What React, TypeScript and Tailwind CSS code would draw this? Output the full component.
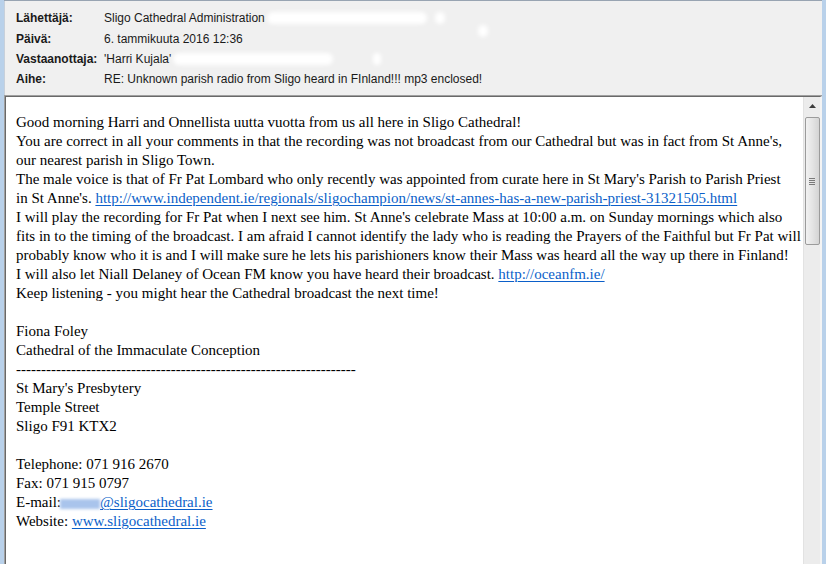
import React from 'react';

const serif = { fontFamily: '"Liberation Serif", "Times New Roman", serif' };

function Redact({ w, className = '' }: { w: string; className?: string }) {
  return <span className={`inline-block h-[12px] align-middle rounded-full bg-white blur-[2px] ${w} ${className}`} />;
}

function Link({ children }: { children: React.ReactNode }) {
  return <a className="text-[#0b5fc9] underline decoration-1 underline-offset-[2px]">{children}</a>;
}

const headerRows: [string, React.ReactNode][] = [
  ['Lähettäjä:', <>Sligo Cathedral Administration <Redact w="w-[160px]" className="ml-[2px]" /><Redact w="w-[10px]" className="ml-[8px] h-[8px]" /></>],
  ['Päivä:', <>6. tammikuuta 2016 12:36 <Redact w="w-[10px]" className="ml-[235px] h-[8px] -mt-[16px]" /></>],
  ['Vastaanottaja:', <>'Harri Kujala' <Redact w="w-[160px]" className="ml-[2px]" /><Redact w="w-[8px]" className="ml-[40px] h-[8px]" /></>],
  ['Aihe:', <>RE: Unknown parish radio from Sligo heard in FInland!!! mp3 enclosed!</>],
];

const bodyLines: React.ReactNode[] = [
  'Good morning Harri and Onnellista uutta vuotta from us all here in Sligo Cathedral!',
  "You are correct in all your comments in that the recording was not broadcast from our Cathedral but was in fact from St Anne's,",
  'our nearest parish in Sligo Town.',
  "The male voice is that of Fr Pat Lombard who only recently was appointed from curate here in St Mary's Parish to Parish Priest",
  <>in St Anne's. <Link>http://www.independent.ie/regionals/sligochampion/news/st-annes-has-a-new-parish-priest-31321505.html</Link></>,
  "I will play the recording for Fr Pat when I next see him. St Anne's celebrate Mass at 10:00 a.m. on Sunday mornings which also",
  'fits in to the timing of the broadcast. I am afraid I cannot identify the lady who is reading the Prayers of the Faithful but Fr Pat will',
  'probably know who it is and I will make sure he lets his parishioners know their Mass was heard all the way up there in Finland!',
  <>I will also let Niall Delaney of Ocean FM know you have heard their broadcast. <Link>http://oceanfm.ie/</Link></>,
  'Keep listening - you might hear the Cathedral broadcast the next time!',
  '',
  'Fiona Foley',
  'Cathedral of the Immaculate Conception',
  '-'.repeat(68),
  "St Mary's Presbytery",
  'Temple Street',
  'Sligo F91 KTX2',
  '',
  'Telephone: 071 916 2670',
  'Fax: 071 915 0797',
  <>E-mail:<span className="inline-block w-[40px] h-[10px] align-middle bg-[#a9c4ec] blur-[1.5px] -ml-[1px]" /><Link>@sligocathedral.ie</Link></>,
  <>Website: <Link>www.sligocathedral.ie</Link></>,
];

export default function App() {
  return (
    <div className="w-[826px] h-[564px] overflow-hidden flex bg-[#b9d1ea]">
      <div className="ml-[4px] w-[818px] h-full flex flex-col bg-[#f0f0f0] border-t border-[#98a4b2]">
        {/* header fields */}
        <div className="h-[94px] pt-[7px] text-[12px] text-[#1a1a1a] border-l border-[#c8d0da]" style={{ fontFamily: '"Liberation Sans", Arial, sans-serif' }}>
          {headerRows.map(([label, value]) => (
            <div key={label} className="flex items-center h-[20.4px] whitespace-nowrap">
              <div className="w-[99px] pl-[11px] font-bold">{label}</div>
              <div className="flex items-center">{value}</div>
            </div>
          ))}
        </div>

        {/* message body */}
        <div className="flex-1 min-h-0 border-t border-l border-[#a0a0a0]">
          <div className="h-full flex border-t border-l border-[#696969] border-r-2 border-r-[#f4f4f4] bg-white">
            <div className="flex-1 min-w-0 overflow-hidden pl-[10px] pt-[16px] text-[15px] leading-[19px] text-black" style={serif}>
              {bodyLines.map((line, i) => (
                <div key={i} className="h-[19px] whitespace-nowrap">{line}</div>
              ))}
            </div>

            {/* scrollbar */}
            <div className="w-[17px] shrink-0 h-full flex flex-col items-center bg-[#ececec] border-l border-[#e2e2e2]">
              <div className="h-[18px] w-full flex items-center justify-center">
                <svg width="7" height="4" viewBox="0 0 7 4"><path d="M3.5 0 L7 4 L0 4 Z" fill="#3c3c3c" /></svg>
              </div>
              <div className="mt-[2px] w-[15px] h-[128px] rounded-[2px] border border-[#9b9b9b] bg-gradient-to-r from-[#f2f2f2] via-[#e4e4e4] to-[#d4d4d4] flex items-center justify-center">
                <div className="flex flex-col gap-[1px]">
                  <div className="w-[6px] h-px bg-[#7a7a7a]" />
                  <div className="w-[6px] h-px bg-[#7a7a7a]" />
                  <div className="w-[6px] h-px bg-[#7a7a7a]" />
                  <div className="w-[6px] h-px bg-[#7a7a7a]" />
                </div>
              </div>
            </div>
          </div>
        </div>
      </div>
    </div>
  );
}
